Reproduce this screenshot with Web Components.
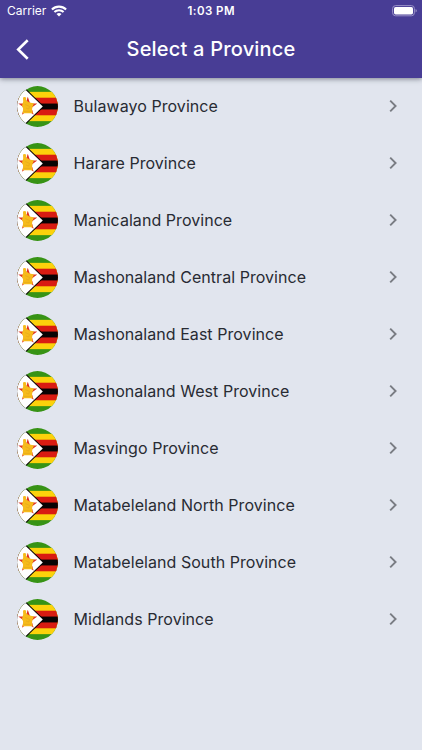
<!DOCTYPE html>
<html lang="en"><head><meta charset="utf-8"><title>Select a Province</title>
<style>
body{margin:0;background:#e1e5ee;font-family:Inter,"Liberation Sans",sans-serif}
</style></head><body>
<province-screen></province-screen>
<script>
const define = (name, html) => customElements.define(name, class extends HTMLElement {
  constructor() {
    super();
    this.attachShadow({mode: 'open'}).innerHTML = html;
  }
});

define('wifi-icon', `<style>:host{display:block;width:16px;height:12px}svg{display:block}</style>
<svg width="16" height="12" viewBox="0 0 16 12" fill="none" stroke="#fff" stroke-width="2.1">
<path d="M.9 4.5a10.2 10.2 0 0 1 14.2 0"/><path d="M3.4 7.1a6.6 6.6 0 0 1 9.2 0"/>
<path d="M8 11.6 5.5 9.1a3.6 3.6 0 0 1 5 0z" fill="#fff" stroke="none"/></svg>`);

define('battery-icon', `<style>:host{display:block;width:25px;height:12px}svg{display:block}</style>
<svg width="25" height="12" viewBox="0 0 25 12">
<rect x=".6" y=".6" width="21.8" height="10.2" rx="3" fill="none" stroke="#9a92c8" stroke-width="1"/>
<rect x="2" y="2" width="19" height="7.4" rx="1.6" fill="#fff"/>
<path d="M23.6 4v3.6q1.1-.5 1.1-1.8T23.6 4z" fill="#a69fce"/></svg>`);

define('status-bar', `<style>
:host{display:grid;grid-template-columns:1fr auto 1fr;align-items:center;height:22px;padding:0 5px 0 7px;color:#fff;font-size:12px;line-height:22px}
.left{display:flex;align-items:center;gap:5px;letter-spacing:0}
.time{font-weight:600;letter-spacing:.45px;font-size:11.5px;margin-right:1.5px}
battery-icon{justify-self:end}
</style><div class="left"><slot name="carrier"></slot><wifi-icon></wifi-icon></div><div class="time"><slot name="time"></slot></div><battery-icon></battery-icon>`);

define('app-bar', `<style>
:host{display:grid;grid-template-columns:48px 1fr 48px;align-items:center;height:56px;color:#fff}
svg{display:block;margin-left:15px}
.title{text-align:center;font-size:20px;font-weight:500;letter-spacing:.2px;line-height:28px;white-space:nowrap;margin-top:-3px}
</style><svg width="16" height="22" viewBox="0 0 16 22" fill="none" stroke="#fff" stroke-width="2.6"><path d="M12.7 1.2 3.2 10.5l9.5 9.3"/></svg>
<div class="title"><slot></slot></div>`);

define('zimbabwe-flag', `<style>:host{display:block;width:41px;height:41px}svg{display:block;clip-path:circle(20.4px)}</style>
<svg width="41" height="41" viewBox="0 0 41 41">
<rect width="41" height="41" fill="#379315"/>
<rect y="5.86" width="41" height="29.28" fill="#fcd20b"/>
<rect y="11.72" width="41" height="17.57" fill="#d91c12"/>
<rect y="17.57" width="41" height="5.86" fill="#080404"/>
<path d="M-3-8.8 27.2 20.5-3 49.8z" fill="#080404"/>
<path d="M-3-7.3 25.8 20.5-3 48.3z" fill="#fff"/>
<path d="m10.8 10.7 2.3 6.7h7.2l-5.8 4.4 2.2 6.9-5.9-4.2-5.9 4.2 2.2-6.9-5.8-4.4h7.2z" fill="#df3522"/>
<path d="M6 11.6q1.8-1.3 3.2.1l-.3 2.5 3 2.1 5.1 1.2-1.4 3-.6 3 .7 3.8H5.5l.7-4.4-1.2-3.3 1.2-4z" fill="#f6bb1b"/>
<path d="m8.2 18.5 4.4 2-1 2.6-2.6-1.2M6.4 25.4h7.8" fill="none" stroke="#e2a41e" stroke-width=".6"/>
</svg>`);

define('province-row', `<style>
:host{display:flex;align-items:center;height:57px;padding:0 20px 0 17px;box-sizing:border-box}
.label{flex:1;margin-left:15.6px;margin-top:-2px;font-size:16px;line-height:24px;letter-spacing:.05px;color:#282b33;white-space:nowrap}
svg{display:block;margin-top:-1px}
</style><zimbabwe-flag></zimbabwe-flag><div class="label"><slot></slot></div>
<svg width="18" height="18" viewBox="0 0 18 18" fill="none" stroke="#797c83" stroke-width="1.9"><path d="m6.2 3.6 5.4 5.4-5.4 5.4"/></svg>`);

define('province-screen', `<style>
:host{display:flex;flex-direction:column;height:750px;overflow:hidden;background:#e1e5ee}
header{background:#483d95;box-shadow:0 1px 5px rgba(40,44,60,.55);z-index:1}
main{display:flex;flex-direction:column}
</style><header><status-bar><span slot="carrier">Carrier</span><span slot="time">1:03 PM</span></status-bar><app-bar>Select a Province</app-bar></header>
<main>${['Bulawayo','Harare','Manicaland','Mashonaland Central','Mashonaland East','Mashonaland West','Masvingo','Matabeleland North','Matabeleland South','Midlands'].map(n => `<province-row>${n} Province</province-row>`).join('')}</main>`);
</script></body></html>
